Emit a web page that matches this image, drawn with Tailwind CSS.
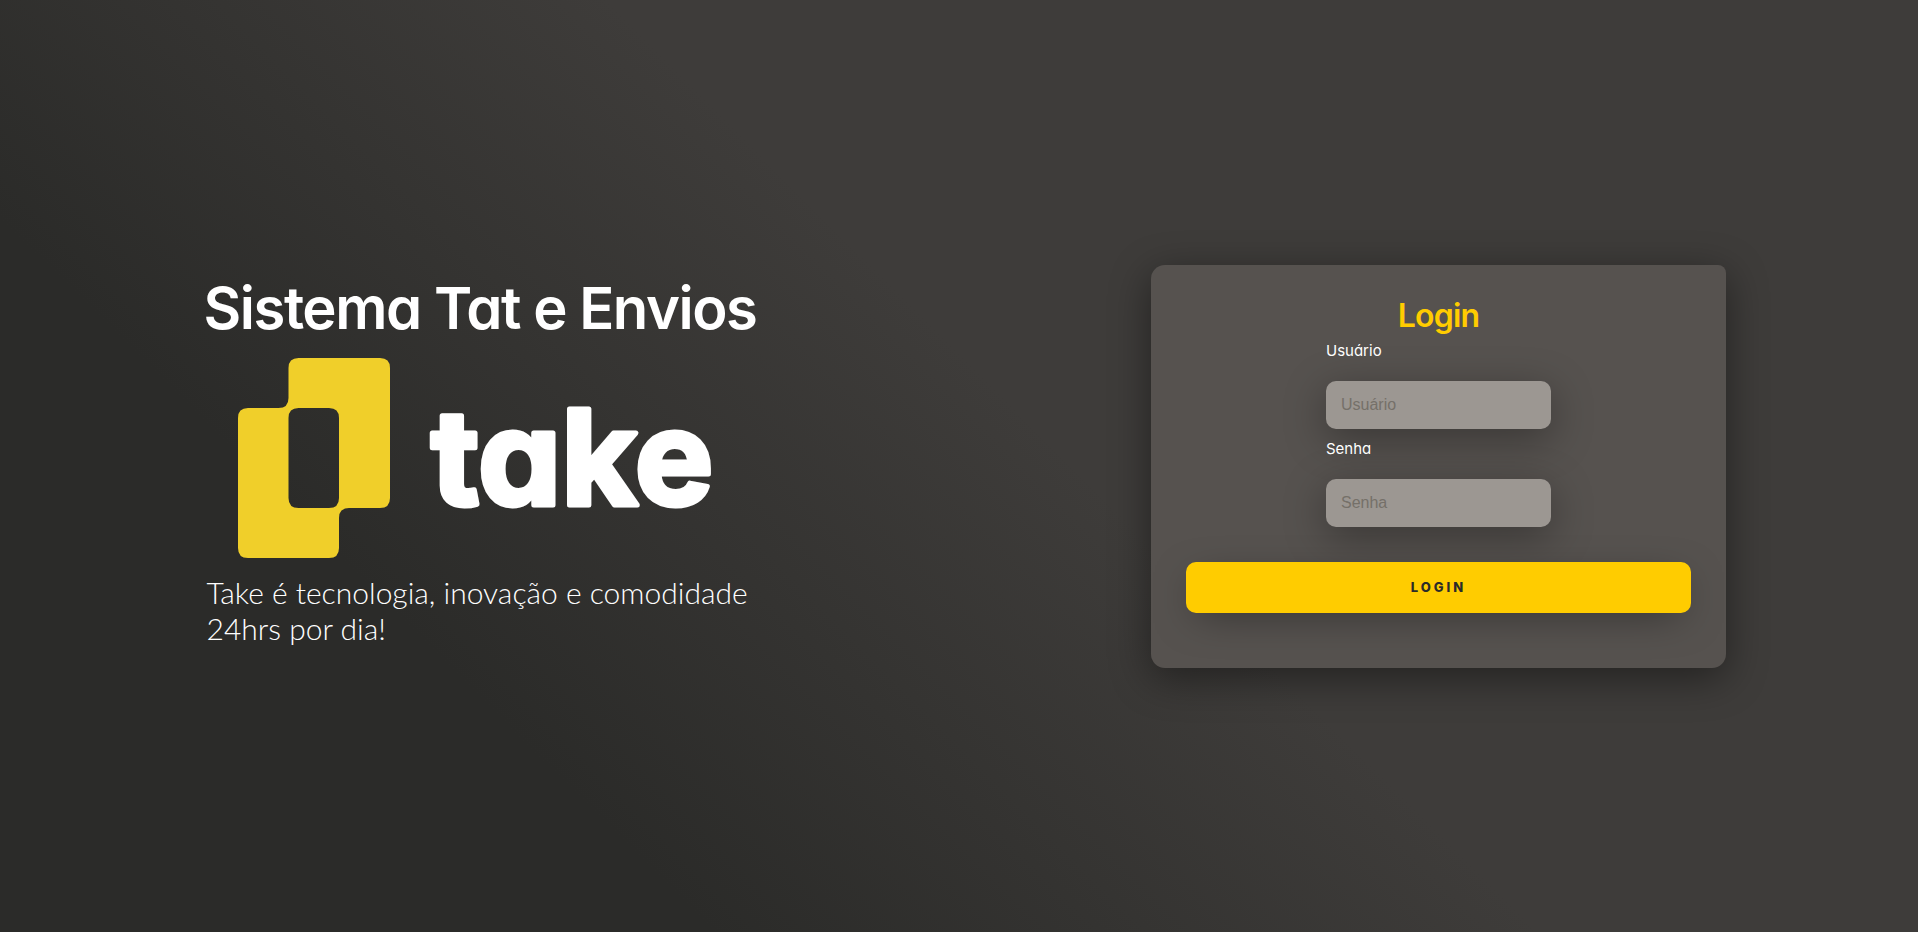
<!DOCTYPE html>
<html lang="pt-BR">
<head>
<meta charset="utf-8">
<meta name="viewport" content="width=device-width, initial-scale=1">
<title>Sistema Tat e Envios</title>
<script src="https://cdn.jsdelivr.net/npm/@tailwindcss/browser@4"></script>
</head>
<body class="min-h-screen bg-[linear-gradient(45deg,#2b2b29_25%,#3e3c3a_54%)] font-['Inter','Open_Sans',sans-serif] text-white [font-feature-settings:'cv11']">
<main class="grid min-h-screen grid-cols-1 lg:grid-cols-2">
  <section class="flex flex-col items-center justify-center">
    <div class="flex w-[552px] max-w-full flex-col pb-4">
      <h1 class="whitespace-nowrap text-[58px] font-semibold leading-[76px] tracking-tight">Sistema Tat e Envios</h1>
      <svg class="mt-3 ml-[34px] h-[200px] w-[480px]" viewBox="0 0 480 200" role="img" aria-label="take">
        <path fill="#f0cf2a" fill-rule="evenodd" d="M60.500 0H142Q152 0 152 10V140Q152 150 142 150H111Q101 150 101 160V190Q101 200 91 200H10Q0 200 0 190V60Q0 50 10 50H40.500Q50.500 50 50.500 40V10Q50.500 0 60.500 0ZM60.500 50Q50.500 50 50.500 60V140Q50.500 150 60.500 150H91Q101 150 101 140V60Q101 50 91 50Z"/>
        <text x="193" y="147" fill="#fff" stroke="#fff" stroke-width="5" stroke-linejoin="round" class="text-[132px] font-bold">take</text>
      </svg>
      <p class="mt-4 pl-[3px] font-['Lato','Open_Sans',sans-serif] text-[30px] font-light leading-9">Take é tecnologia, inovação e comodidade 24hrs por dia!</p>
    </div>
  </section>
  <section class="flex items-center justify-center">
    <form class="flex w-3/5 flex-col items-center rounded-[14px] rounded-tr-lg bg-[#56524f] px-[35px] pt-[30px] pb-[55px] shadow-[0_10px_40px_#00000070]">
      <h2 class="text-[32px] font-semibold leading-[42px] tracking-tight text-[#ffcc00]">Login</h2>
      <div class="flex w-[225px] flex-col">
        <label for="user" class="pt-[2px] text-[15px] leading-[24px]">Usuário</label>
        <input id="user" type="text" placeholder="Usuário" class="mt-[18px] h-12 w-full rounded-[10px] bg-[#9c9792] px-[15px] font-['Liberation_Sans',sans-serif] text-base text-[#222] shadow-[0_10px_40px_#00000056] placeholder:text-[#757069]">
        <label for="password" class="mt-[6px] pt-[2px] text-[15px] leading-[24px]">Senha</label>
        <input id="password" type="password" placeholder="Senha" class="mt-[18px] h-12 w-full rounded-[10px] bg-[#9c9792] px-[15px] font-['Liberation_Sans',sans-serif] text-base text-[#222] shadow-[0_10px_40px_#00000056] placeholder:text-[#757069]">
      </div>
      <button type="submit" class="mt-[35px] h-[51px] w-full rounded-[10px] bg-[#ffcc00] pt-[2px] text-[13px] font-extrabold tracking-[3px] text-[#2b2b29] shadow-[0_10px_40px_-12px_#00000080]">LOGIN</button>
    </form>
  </section>
</main>
</body>
</html>
